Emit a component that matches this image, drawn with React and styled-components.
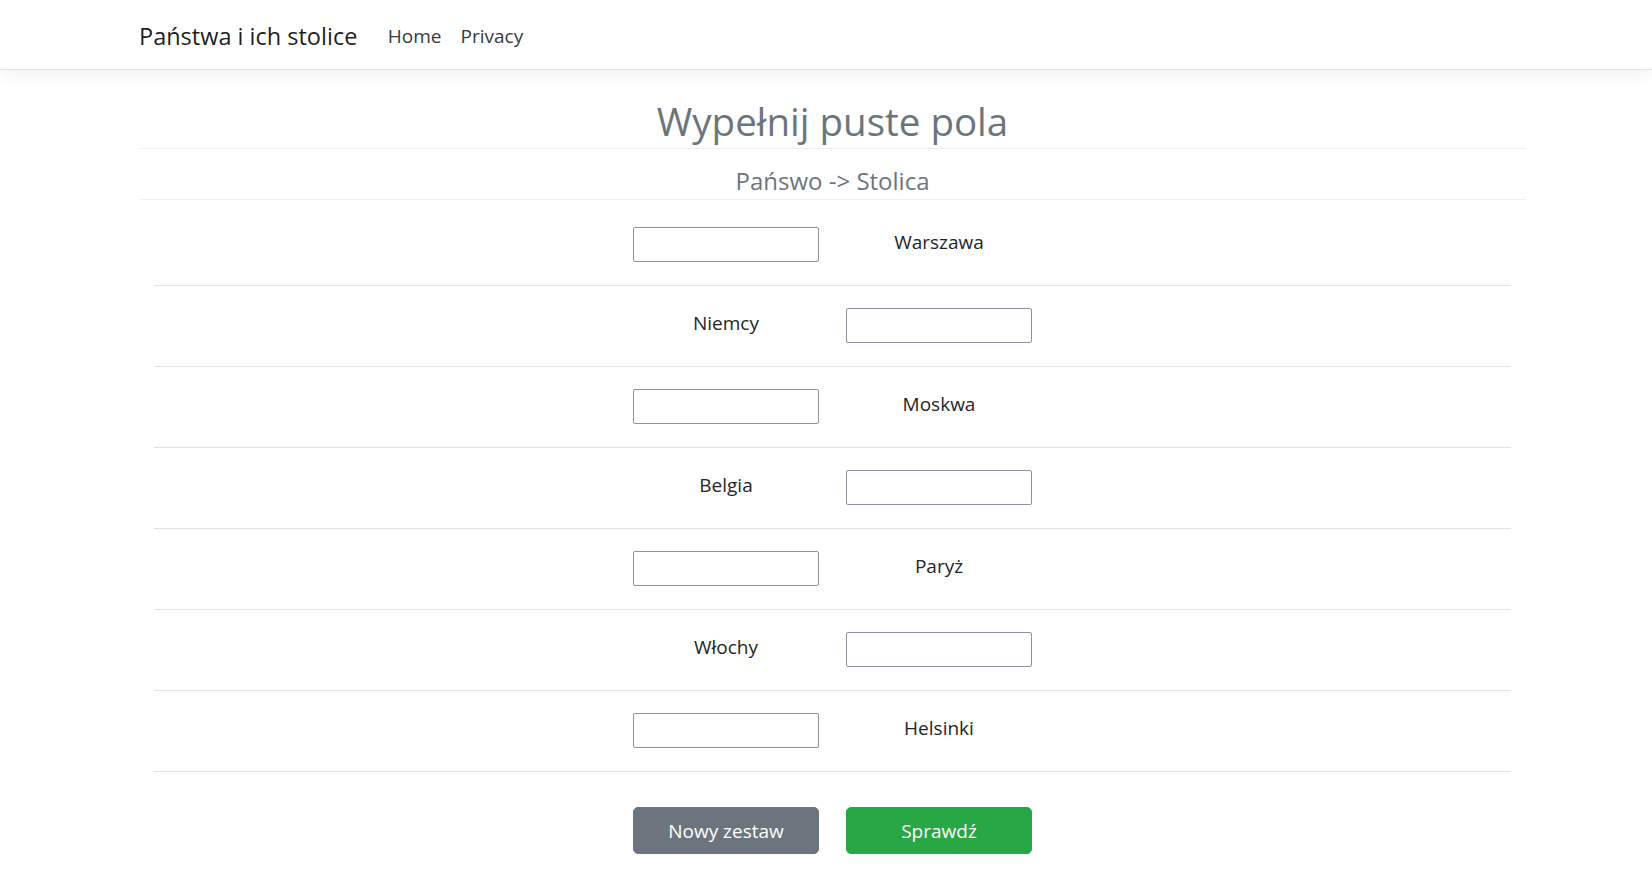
import React from "react";
import styled, { createGlobalStyle } from "styled-components";

const GlobalStyle = createGlobalStyle`
  html, body {
    margin: 0;
    padding: 0;
    background: #fff;
  }
  body {
    font-family: "Open Sans", "Noto Sans", Arial, sans-serif;
    font-size: 19px;
    color: #212529;
  }
  * {
    box-sizing: border-box;
  }
`;

// NAVBAR
const Navbar = styled.header`
  height: 70px;
  background: #fff;
  border-bottom: 1px solid #e5e5e5;
  box-shadow: 0 5px 15px rgba(0, 0, 0, 0.05);
  display: flex;
  align-items: center;
`;
const NavInner = styled.nav`
  width: 1387px;
  margin-left: 139px;
  display: flex;
  align-items: center;
  padding-top: 2px;
`;
const Brand = styled.a`
  font-size: 23.5px;
  color: rgba(0, 0, 0, 0.9);
  text-decoration: none;
  margin-right: 21px;
`;
const NavLink = styled.a`
  font-size: 19px;
  color: #343a40;
  text-decoration: none;
  padding: 0 9.5px;
`;

// MAIN
const Container = styled.main`
  width: 1387px;
  margin-left: 139px;
`;
const Title = styled.h1`
  margin: 27px 0 0;
  padding-bottom: 3px;
  font-size: 38.5px;
  line-height: 48px;
  font-weight: 400;
  color: #6c757d;
  text-align: center;
  border-bottom: 1px solid #efefef;
`;
const Subtitle = styled.h4`
  margin: 0;
  padding: 17px 0 4px;
  font-size: 24px;
  line-height: 29px;
  font-weight: 400;
  color: #6c757d;
  text-align: center;
  border-bottom: 1px solid #efefef;
`;
const Rows = styled.div`
  margin: 5px 15px 0;
`;
const Row = styled.div`
  display: flex;
  justify-content: center;
  padding: 22px 0 23px;
  border-bottom: 1px solid #e3e3e3;
`;
const Cell = styled.div`
  width: 213px;
  padding: 0 13.5px;
  height: 35px;
  display: flex;
  align-items: center;
  justify-content: center;
`;
const Label = styled.span`
  margin-top: -6px;
`;
const Input = styled.input`
  width: 100%;
  height: 35px;
  border: 1px solid #8f8f9d;
  border-radius: 2px;
  background: #fff;
  font: inherit;
`;
const Actions = styled.div`
  display: flex;
  justify-content: center;
  margin: 35px 15px 0;
`;
const ActionCell = styled.div`
  width: 213px;
  padding: 0 13.5px;
`;
const Button = styled.button`
  width: 100%;
  height: 47px;
  padding: 0 0 0;
  border: 1px solid ${(props) => (props.success ? "#28a745" : "#6c757d")};
  background: ${(props) => (props.success ? "#28a745" : "#6c757d")};
  color: #fff;
  border-radius: 5px;
  font-family: inherit;
  font-size: 19px;
  cursor: pointer;
`;

const pairs = [
  { country: null, capital: "Warszawa" },
  { country: "Niemcy", capital: null },
  { country: null, capital: "Moskwa" },
  { country: "Belgia", capital: null },
  { country: null, capital: "Paryż" },
  { country: "Włochy", capital: null },
  { country: null, capital: "Helsinki" },
];

const App = () => {
  return (
    <>
      <GlobalStyle />
      <Navbar>
        <NavInner>
          <Brand href="#">Państwa i ich stolice</Brand>
          <NavLink href="#">Home</NavLink>
          <NavLink href="#">Privacy</NavLink>
        </NavInner>
      </Navbar>
      <Container>
        <Title>Wypełnij puste pola</Title>
        <Subtitle>Pańswo -&gt; Stolica</Subtitle>
        <Rows>
          {pairs.map((p, i) => (
            <Row key={i}>
              <Cell>
                {p.country ? <Label>{p.country}</Label> : <Input type="text" />}
              </Cell>
              <Cell>
                {p.capital ? <Label>{p.capital}</Label> : <Input type="text" />}
              </Cell>
            </Row>
          ))}
        </Rows>
        <Actions>
          <ActionCell>
            <Button>Nowy zestaw</Button>
          </ActionCell>
          <ActionCell>
            <Button success>Sprawdź</Button>
          </ActionCell>
        </Actions>
      </Container>
    </>
  );
};

export default App;
